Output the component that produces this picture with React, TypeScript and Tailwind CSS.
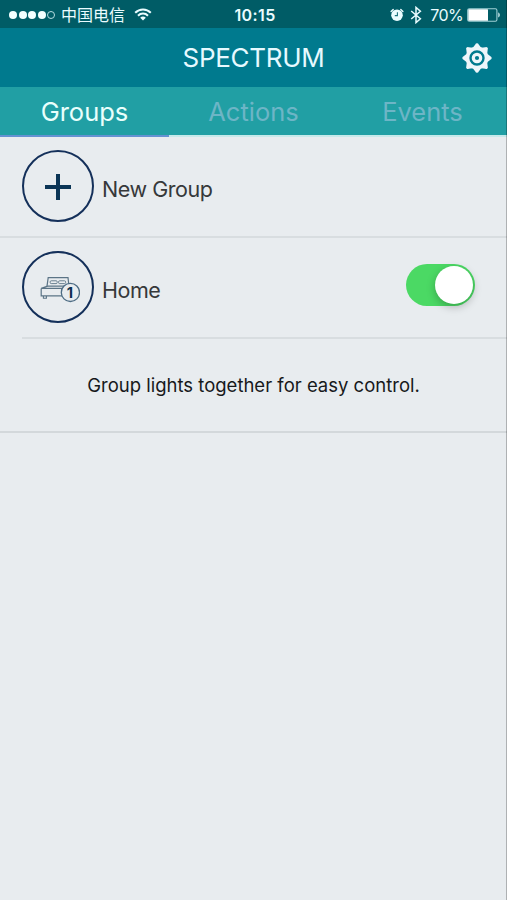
import { useState } from 'react';
import type { ReactNode } from 'react';
import clsx from 'clsx';

const TABS = ['Groups', 'Actions', 'Events'];

// -------------------------------------------------------------------------
// Icons
// -------------------------------------------------------------------------

function WifiIcon() {
  return (
    <svg className="w-[18px] h-[13px]" viewBox="0 0 18 13" fill="none" stroke="#eafcff" strokeWidth="2">
      <path d="M1.2 4.8C5.6 .4 12.4 .4 16.8 4.8" />
      <path d="M4 7.7C6.8 4.9 11.2 4.9 14 7.7" />
      <path d="M9 12.4L6.2 9.7C7.8 8.2 10.2 8.2 11.8 9.7Z" fill="#eafcff" stroke="none" />
    </svg>
  );
}

function AlarmIcon() {
  return (
    <svg className="w-[14px] h-[14px]" viewBox="0 0 14 14">
      <circle cx="7" cy="7.2" r="5.8" fill="#eafcff" />
      <path d="M1.1 3.6L3.2 1.5M12.9 3.6L10.8 1.5" stroke="#eafcff" strokeWidth="1.4" strokeLinecap="round" />
      <path d="M7.4 4.2V7.6H4.8" fill="none" stroke="#1c737c" strokeWidth="1.1" />
    </svg>
  );
}

function BluetoothIcon() {
  return (
    <svg className="w-[12px] h-[18px]" viewBox="0 0 12 18" fill="none" stroke="#eafcff" strokeWidth="1.5">
      <path d="M1.2 5L10.4 12.8L6 16.6V1.4L10.4 5.2L1.2 13" />
    </svg>
  );
}

function BatteryIcon() {
  return (
    <svg className="w-[34px] h-[14px]" viewBox="0 0 34 14">
      <rect x=".7" y=".7" width="29.2" height="12.6" rx="1.6" fill="none" stroke="#9fd0d5" strokeWidth="1.1" />
      <rect x="1.3" y="1.3" width="19.7" height="11.4" rx=".5" fill="#fff" />
      <path d="M31.2 4.6C33.4 5.2 33.4 8.8 31.2 9.4Z" fill="#b9dde1" />
    </svg>
  );
}

function GearIcon() {
  return (
    <svg className="w-[30px] h-[30px]" viewBox="-15 -15 30 30">
      <g fill="#eef6fa">
        <circle r="11.4" />
        {[0, 45, 90, 135, 180, 225, 270, 315].map((angle) => (
          <path
            key={angle}
            d="M-4.2 -10.2L-1.7 -13.4Q-1.3 -14.7 0 -14.7Q1.3 -14.7 1.7 -13.4L4.2 -10.2Z"
            transform={`rotate(${angle})`}
          />
        ))}
      </g>
      <circle r="6.5" fill="none" stroke="#007a8e" strokeWidth="2.4" />
      <circle r="2.1" fill="#007a8e" />
    </svg>
  );
}

function PlusIcon() {
  return (
    <svg className="mt-[2px] w-[26px] h-[26px]" viewBox="0 0 26 26" stroke="#0b3556" strokeWidth="4">
      <path d="M13 0V26M0 13H26" />
    </svg>
  );
}

function BedIcon() {
  return (
    <svg className="mt-[2px] w-[44px] h-[30px]" viewBox="-3 -.4 44 30" fill="none" stroke="#5b7486" strokeWidth="1.2">
      <path d="M8 12.8L9.2 4.2H29L30 12.8" />
      <path d="M8.6 12.8H31L32 15H2.2Z" />
      <path d="M2.2 15V22.4H24" />
      <path d="M4.4 22.6V24.8H7.4V22.6" strokeWidth="1.1" />
      <rect x="11.2" y="7.4" width="7" height="2.8" rx="1" strokeWidth=".9" />
      <rect x="19.6" y="7.4" width="7" height="2.8" rx="1" strokeWidth=".9" />
      <circle cx="31.4" cy="19" r="9.1" fill="#e8ecef" stroke="#4d6c84" strokeWidth="1.3" />
      <text
        x="30.9"
        y="24.2"
        textAnchor="middle"
        fill="#0b2f50"
        stroke="none"
        fontSize="14.5"
        fontWeight="700"
        fontFamily="Inter, sans-serif"
      >
        1
      </text>
    </svg>
  );
}

// -------------------------------------------------------------------------
// Building blocks
// -------------------------------------------------------------------------

function StatusBar() {
  return (
    <div className="h-7 shrink-0 grid grid-cols-[1fr_auto_1fr] items-center pl-[9px] pr-[6px] pt-[2px] bg-[#005c66] text-[#eafcff]">
      <div className="flex items-center">
        <div className="flex gap-[1.5px]">
          {[0, 1, 2, 3].map((dot) => (
            <span key={dot} className="size-2 rounded-full bg-[#f4ffff]" />
          ))}
          <span className="size-2 rounded-full border border-[#b5dde1]" />
        </div>
        <span className="ml-[6px] pb-[2px] text-[16px] leading-none font-['Noto_Sans_CJK_SC',sans-serif]">
          中国电信
        </span>
        <span className="ml-[9px] pb-[2px]">
          <WifiIcon />
        </span>
      </div>
      <span className="text-[16px] leading-none font-semibold tracking-[0.4px]">10:15</span>
      <div className="flex items-center justify-end">
        <AlarmIcon />
        <span className="ml-[6px]">
          <BluetoothIcon />
        </span>
        <span className="ml-[8px] text-[16px] leading-none tracking-[-0.6px]">70%</span>
        <span className="ml-[4px]">
          <BatteryIcon />
        </span>
      </div>
    </div>
  );
}

function RoundIcon({ children }: { children: ReactNode }) {
  return (
    <span className="-mt-px size-[72px] shrink-0 flex items-center justify-center rounded-full border-2 border-[#14305a]">
      {children}
    </span>
  );
}

function Switch({ on, onToggle }: { on: boolean; onToggle: () => void }) {
  return (
    <button
      type="button"
      role="switch"
      aria-checked={on}
      aria-label="Home"
      onClick={onToggle}
      className={clsx(
        'w-[69px] h-[42px] px-[2px] flex items-center rounded-full',
        on ? 'bg-[#4bd964] justify-end' : 'bg-gray-300 justify-start'
      )}
    >
      <span className="size-[38px] rounded-full bg-white shadow-[0_3px_8px_rgba(0,0,0,0.25)]" />
    </button>
  );
}

export default function App() {
  const [activeTab, setActiveTab] = useState('Groups');
  const [homeOn, setHomeOn] = useState(true);

  return (
    <div className="relative w-full h-screen flex flex-col overflow-hidden bg-[#e8ecef] font-['Inter',sans-serif]">
      <StatusBar />

      {/* Title bar */}
      <header className="h-[59px] shrink-0 grid grid-cols-[1fr_auto_1fr] items-center pl-[15px] pr-[15px] bg-[#007a8e]">
        <span />
        <h1 className="text-[26px] leading-none text-[#e6f9ff] tracking-[-0.3px]">SPECTRUM</h1>
        <button type="button" aria-label="Settings" className="justify-self-end">
          <GearIcon />
        </button>
      </header>

      {/* Tabs */}
      <nav className="h-[50px] shrink-0 grid grid-cols-3 bg-[#219fa4]">
        {TABS.map((tab) => (
          <button
            key={tab}
            type="button"
            onClick={() => setActiveTab(tab)}
            className={clsx(
              'pt-[2px] text-[25.5px] leading-none border-b-2',
              tab === activeTab ? 'text-[#e9fffc] border-[#6492d2]' : 'text-[#6db5c6] border-[#c6e9ea]'
            )}
          >
            {tab}
          </button>
        ))}
      </nav>

      {/* Group list */}
      <main className="text-[#36383a]">
        <div className="h-[101px] flex items-center pl-[22px] border-b-2 border-[#d8dde0]">
          <RoundIcon>
            <PlusIcon />
          </RoundIcon>
          <span className="ml-[8px] pt-[6px] text-[21.5px] leading-none tracking-[-0.45px]">New Group</span>
        </div>
        <div className="ml-[22px] h-[101px] flex items-center pr-[32px] border-b-2 border-[#d8dde0]">
          <RoundIcon>
            <BedIcon />
          </RoundIcon>
          <span className="ml-[8px] pt-[6px] text-[21.5px] leading-none tracking-[-0.45px]">Home</span>
          <span className="ml-auto -mt-[6px] flex">
            <Switch on={homeOn} onToggle={() => setHomeOn(!homeOn)} />
          </span>
        </div>
        <p className="h-[94px] flex items-center justify-center pt-[2px] border-b-2 border-[#d3d8db] text-[18.5px] text-[#17191b]">
          Group lights together for easy control.
        </p>
      </main>

      {/* Hairline along the right edge */}
      <div className="absolute inset-y-0 right-0 w-px bg-black/25 pointer-events-none" />
    </div>
  );
}
